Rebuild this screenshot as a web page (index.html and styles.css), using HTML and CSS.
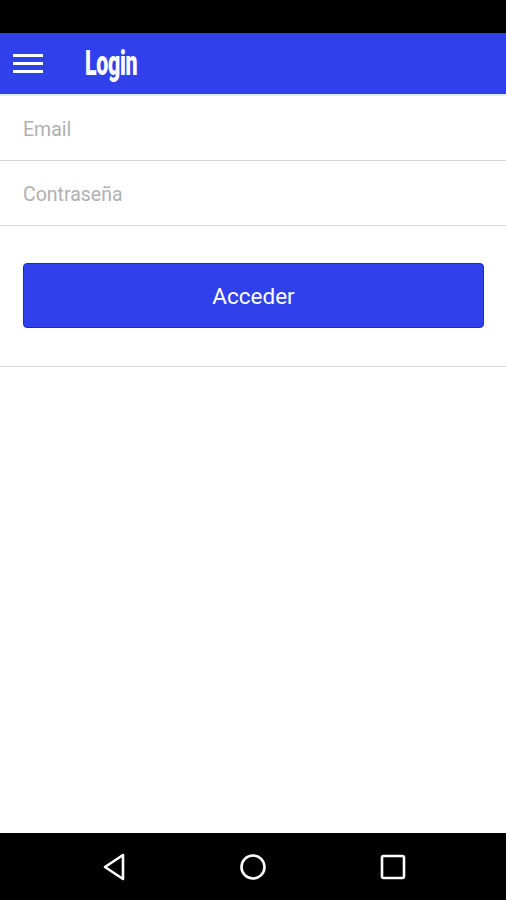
FILE: index.html
```html
<!DOCTYPE html>
<html lang="es">
<head>
    <meta charset="UTF-8">
    <meta name="viewport" content="width=device-width, initial-scale=1.0">
    <title>Login</title>
    <link rel="stylesheet" href="styles.css">
</head>
<body>
    <div class="status-bar"></div>
    <header class="app-bar">
        <button class="menu-button" aria-label="Menu">
            <span></span><span></span><span></span>
        </button>
        <h1 class="title">Login</h1>
    </header>
    <main class="content">
        <form class="login-form">
            <input class="field" type="email" placeholder="Email">
            <input class="field" type="password" placeholder="Contraseña">
            <div class="actions">
                <button type="submit" class="submit">Acceder</button>
            </div>
        </form>
    </main>
    <nav class="nav-bar">
        <svg width="24" height="28" viewBox="0 0 24 28"><path d="M21 2 L3 14 L21 26 Z" fill="none" stroke="#fff" stroke-width="2.6" stroke-linejoin="round"/></svg>
        <svg width="28" height="28" viewBox="0 0 28 28"><circle cx="14" cy="14" r="11.5" fill="none" stroke="#fff" stroke-width="2.6"/></svg>
        <svg width="26" height="26" viewBox="0 0 26 26"><rect x="2" y="2" width="22" height="22" rx="1.5" fill="none" stroke="#fff" stroke-width="2.6"/></svg>
    </nav>
</body>
</html>
```

FILE: styles.css
```css
* {
    box-sizing: border-box;
}
body {
    margin: 0;
    height: 900px;
    display: flex;
    flex-direction: column;
    font-family: Roboto, "Liberation Sans", sans-serif;
    background-color: #FFFFFF;
}
.status-bar {
    height: 33px;
    background-color: #000000;
}
.app-bar {
    height: 63px;
    display: flex;
    align-items: center;
    background-color: #3040EA;
    border-bottom: 2px solid #E6E8FC;
}
.menu-button {
    width: 30px;
    margin-left: 13px;
    padding: 0;
    border: none;
    background: none;
    display: flex;
    flex-direction: column;
    gap: 5px;
}
.menu-button span {
    height: 3px;
    background-color: #FFFFFF;
}
.title {
    display: inline-block;
    margin: 0 0 0 42px;
    color: #FFFFFF;
    font-family: Roboto, "Liberation Sans", sans-serif;
    font-weight: 900;
    font-size: 35px;
    letter-spacing: -0.5px;
    line-height: 1;
    transform: scaleX(0.61);
    transform-origin: left center;
}
.content {
    flex: 1;
}
.login-form {
    display: flex;
    flex-direction: column;
}
.field {
    height: 65px;
    padding: 3px 23px 0;
    border: none;
    border-bottom: 1px solid #D6D6D6;
    font-family: Roboto, "Liberation Sans", sans-serif;
    font-size: 19.5px;
    color: #333333;
    outline: none;
}
.field::placeholder {
    color: #B0B0B0;
}
.actions {
    padding: 37px 22px 38px 23px;
    border-bottom: 1px solid #D6D6D6;
}
.submit {
    width: 100%;
    height: 65px;
    border: 1px solid #1A28D8;
    border-radius: 4px;
    background-color: #3040EA;
    color: #FFFFFF;
    font-family: Roboto, "Liberation Sans", sans-serif;
    font-size: 22.5px;
    cursor: pointer;
}
.nav-bar {
    height: 67px;
    background-color: #000000;
    display: flex;
    align-items: center;
    justify-content: space-between;
    padding: 0 100px 0 102px;
}
```
